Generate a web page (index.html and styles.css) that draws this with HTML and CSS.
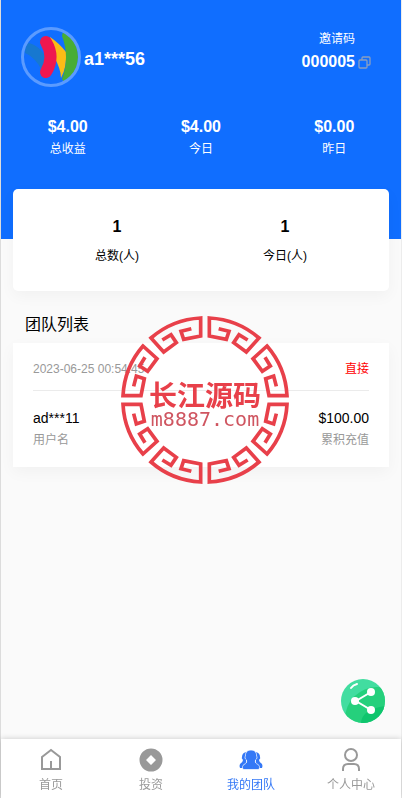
FILE: index.html
```
<!DOCTYPE html>
<html lang="zh-CN">
<head>
    <meta charset="UTF-8">
    <meta name="viewport" content="width=device-width, initial-scale=1.0">
    <title>我的团队</title>
    <link rel="stylesheet" href="styles.css">
</head>
<body>
    <main class="page">
        <header class="header">
            <div class="user">
                <svg class="avatar" viewBox="0 0 60 60" aria-hidden="true">
                    <path d="M7 16C14 17 20 22 24 29L21 44C17 35 11 29 4 26Q4 20 7 16Z" fill="#1778d0"/>
                    <path d="M29 10Q38 16 45 25Q46 40 40 51Q40 42 33 30Z" fill="#fbbc16"/>
                    <path d="M43 5Q57 14 57 30Q57 46 43 55L41 52Q49 30 41 9Q41 6 43 5Z" fill="#48ad35"/>
                    <path d="M25 15Q34 30 25 45" fill="none" stroke="#ef174f" stroke-width="12" stroke-linecap="round"/>
                    <circle class="avatar-ring" cx="30" cy="30" r="28.5"/>
                </svg>
                <span class="user-name">a1***56</span>
                <div class="invite">
                    <span class="invite-label">邀请码</span>
                    <div class="invite-row">
                        <strong class="invite-code">000005</strong>
                        <button class="copy" type="button" aria-label="复制">
                            <svg width="14" height="14" viewBox="0 0 14 14">
                                <rect x="2" y="5" width="8" height="8" rx="1"/>
                                <path d="M5 5V3Q5 2 6 2H12Q13 2 13 3V9Q13 10 12 10H10"/>
                            </svg>
                        </button>
                    </div>
                </div>
            </div>
            <div class="stats">
                <div class="stat"><strong>$4.00</strong><span>总收益</span></div>
                <div class="stat"><strong>$4.00</strong><span>今日</span></div>
                <div class="stat"><strong>$0.00</strong><span>昨日</span></div>
            </div>
        </header>

        <section class="card counts">
            <div class="count"><strong>1</strong><span>总数(人)</span></div>
            <div class="count"><strong>1</strong><span>今日(人)</span></div>
        </section>

        <h1 class="title">团队列表</h1>

        <section class="card member">
            <div class="member-top">
                <time>2023-06-25 00:54:45</time>
                <span class="direct">直接</span>
            </div>
            <div class="member-row">
                <div class="member-col"><b>ad***11</b><span>用户名</span></div>
                <div class="member-col right"><b>$100.00</b><span>累积充值</span></div>
            </div>
        </section>
    </main>

    <!-- site seal -->
    <div class="seal">
        <svg class="seal-ring" viewBox="-270 -270 540 540" aria-hidden="true">
            <defs>
                <path id="key" d="M41 -214L72 -206L64 -182L13 -192V-246A246 246 0 0 1 162 -186L124 -144L86 -172L102 -196L128 -180"/>
                <g id="pair">
                    <use href="#key"/>
                    <use href="#key" transform="scale(-1 1)"/>
                </g>
            </defs>
            <use href="#pair"/>
            <use href="#pair" transform="rotate(90)"/>
            <use href="#pair" transform="rotate(180)"/>
            <use href="#pair" transform="rotate(270)"/>
        </svg>
        <span class="seal-name">长江源码</span>
        <span class="seal-site">m8887.com</span>
    </div>

    <button class="share" type="button" aria-label="分享">
        <svg viewBox="0 0 44 44">
            <defs>
                <clipPath id="disc"><circle cx="22" cy="22" r="22"/></clipPath>
            </defs>
            <g clip-path="url(#disc)">
                <rect width="44" height="44" fill="#42dda0"/>
                <circle cx="36" cy="40" r="32" fill="#25d07c"/>
                <path d="M20 44Q21 30 44 27V44Z" fill="#0fc56d"/>
            </g>
            <path d="M10 9Q12 6 16 5" fill="none" stroke="#fff" stroke-width="2" stroke-linecap="round"/>
            <path d="M30 13L15 22L30 31" fill="none" stroke="#fff" stroke-width="2"/>
            <circle cx="30" cy="13" r="4" fill="#fff"/>
            <circle cx="14" cy="22" r="4" fill="#fff"/>
            <circle cx="30" cy="31" r="4" fill="#fff"/>
        </svg>
    </button>

    <nav class="tabbar">
        <a class="tab" href="#home">
            <svg viewBox="0 0 24 24"><path d="M3 9L12 2L21 9V21H3Z M12 13V21" fill="none" stroke="currentColor" stroke-width="2"/></svg>
            <span>首页</span>
        </a>
        <a class="tab" href="#invest">
            <svg viewBox="0 0 24 24"><path d="M12 0.5A11.5 11.5 0 1 0 12 23.5A11.5 11.5 0 1 0 12 0.5ZM12 7L17 12L12 17L7 12Z" fill="currentColor" fill-rule="evenodd"/></svg>
            <span>投资</span>
        </a>
        <a class="tab active" href="#team">
            <svg viewBox="0 0 24 24">
                <path d="M7 4Q3 5 3 9Q2 10 4 12Q4 14 1 16Q0 18 1 20H7M17 4Q21 5 21 9Q22 10 20 12Q20 14 23 16Q24 18 23 20H17Z" fill="currentColor"/>
                <path d="M12 2C8 2 6 5 6.500 8C5.500 9 6 11 7.500 12C8 15 7 15.500 5 16.500C3.500 17.500 3 19 4 21.500H20C21 19 20.500 17.500 19 16.500C17 15.500 16 15 16.500 12C18 11 18.500 9 17.500 8C18 5 16 2 12 2Z" fill="currentColor" stroke="#fff" stroke-width="0.7"/>
            </svg>
            <span>我的团队</span>
        </a>
        <a class="tab" href="#mine">
            <svg viewBox="0 0 24 24"><g fill="none" stroke="currentColor" stroke-width="2"><circle cx="12" cy="7" r="6"/><path d="M4 23V21Q4 16 9 16H15Q20 16 20 21V23"/></g></svg>
            <span>个人中心</span>
        </a>
    </nav>
</body>
</html>
```
FILE: styles.css
```
* {
    box-sizing: border-box;
}

body {
    margin: 0;
    min-height: 100vh;
    border-left: 1px solid #dcdcdc;
    border-right: 1px solid #ececec;
    background-color: #fafafa;
    color: #000;
    font-family: "Liberation Sans", "Noto Sans CJK SC", sans-serif;
    font-size: 12px;
    line-height: 18px;
}

button {
    padding: 0;
    border: none;
    background: none;
    cursor: pointer;
}

svg {
    display: block;
}

.page {
    padding-bottom: 80px;
}

.header {
    height: 239px;
    padding-top: 27px;
    background-color: #106eff;
    color: #fff;
}

.user {
    display: flex;
    align-items: center;
    padding: 0 30px 0 20px;
}

.avatar {
    width: 60px;
    height: 60px;
}

.avatar-ring {
    fill: none;
    stroke: #5b9bff;
    stroke-width: 3;
}

.user-name {
    margin-left: 3px;
    padding-top: 4px;
    font-size: 18px;
    font-weight: bold;
}

.invite {
    margin-left: auto;
    align-self: flex-start;
    display: flex;
    flex-direction: column;
    align-items: flex-end;
}

.invite-label {
    margin-right: 16px;
    line-height: 24px;
}

.invite-row {
    display: flex;
    align-items: center;
    gap: 2px;
}

.invite-code {
    font-size: 16px;
    line-height: 22px;
}

.copy svg {
    fill: none;
    stroke: #8b9fc0;
    stroke-width: 1.3;
}

.stats {
    display: flex;
    margin-top: 28px;
}

.stat {
    flex: 1;
    display: flex;
    flex-direction: column;
    align-items: center;
}

.stat strong,
.count strong {
    font-size: 16px;
    line-height: 24px;
}

.stat span {
    line-height: 20px;
}

.card {
    margin: 0 12px;
    background-color: #fff;
    box-shadow: 0 5px 15px rgba(0, 0, 0, 0.04);
}

.counts {
    position: relative;
    display: flex;
    margin-top: -50px;
    padding: 26px 20px;
    border-radius: 5px;
}

.count {
    flex: 1;
    display: flex;
    flex-direction: column;
    align-items: center;
    gap: 8px;
}

.title {
    margin: 22px 24px 6px;
    font-size: 16px;
    font-weight: normal;
    line-height: 24px;
}

.member {
    padding: 0 20px 16px;
}

.member-top {
    display: flex;
    justify-content: space-between;
    align-items: center;
    height: 48px;
    padding-top: 4px;
    border-bottom: 1px solid #ebebeb;
    color: #999;
}

.direct {
    color: #f00;
}

.member-row {
    display: flex;
    justify-content: space-between;
    padding-top: 16px;
}

.member-col {
    display: flex;
    flex-direction: column;
    color: #999;
}

.member-col b {
    color: #000;
    font-size: 14px;
    font-weight: normal;
    line-height: 22px;
}

.member-col span {
    line-height: 22px;
}

.right {
    align-items: flex-end;
}

.seal {
    position: fixed;
    top: 310px;
    left: 50%;
    width: 180px;
    height: 180px;
    margin-left: -86px;
    padding-top: 14px;
    display: flex;
    flex-direction: column;
    align-items: center;
    justify-content: center;
    color: #e8404a;
    pointer-events: none;
}

.seal-ring {
    position: absolute;
    top: 0;
    left: 0;
    width: 180px;
    height: 180px;
    fill: none;
    stroke: #e8404a;
    stroke-width: 11;
}

.seal-name {
    font-size: 28px;
    font-weight: bold;
    line-height: 24px;
}

.seal-site {
    color: #cf5560;
    font-family: "DejaVu Sans Mono", monospace;
    font-size: 20px;
    line-height: 20px;
}

.share {
    position: fixed;
    right: 17px;
    bottom: 75px;
    width: 44px;
    height: 44px;
}

.tabbar {
    position: fixed;
    right: 1px;
    bottom: 0;
    left: 1px;
    display: flex;
    height: 59px;
    padding-top: 9px;
    background-color: #fff;
    box-shadow: 0 0 6px rgba(0, 0, 0, 0.2);
}

.tab {
    flex: 1;
    display: flex;
    flex-direction: column;
    align-items: center;
    gap: 4px;
    color: #999;
    text-decoration: none;
}

.tab svg {
    width: 24px;
    height: 24px;
}

.active {
    color: #3478f6;
}
```
